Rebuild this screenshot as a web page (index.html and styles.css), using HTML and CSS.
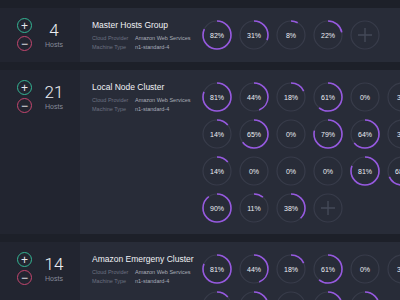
FILE: index.html
```html
<!DOCTYPE html>
<html lang="en">
<head>
    <meta charset="UTF-8">
    <title>Host Clusters</title>
    <link rel="stylesheet" href="styles.css">
</head>
<body>
    <div class="clusters">

        <!-- Master Hosts Group -->
        <div class="cluster">
            <div class="hosts">
                <div class="steppers">
                    <span class="step plus">+</span>
                    <span class="step minus">&minus;</span>
                </div>
                <div class="count">
                    <div class="num">4</div>
                    <div class="label">Hosts</div>
                </div>
            </div>
            <div class="detail">
                <div class="info">
                    <div class="title">Master Hosts Group</div>
                    <div class="meta"><span>Cloud Provider</span><b>Amazon Web Services</b></div>
                    <div class="meta"><span>Machine Type</span><b>n1-standard-4</b></div>
                </div>
                <div class="rings">
                    <div class="ring"><svg viewBox="0 0 30 30"><circle class="track" cx="15" cy="15" r="14"/><circle class="arc" cx="15" cy="15" r="14" pathLength="100" stroke-dasharray="82 100"/></svg><span>82%</span></div>
                    <div class="ring"><svg viewBox="0 0 30 30"><circle class="track" cx="15" cy="15" r="14"/><circle class="arc" cx="15" cy="15" r="14" pathLength="100" stroke-dasharray="31 100"/></svg><span>31%</span></div>
                    <div class="ring"><svg viewBox="0 0 30 30"><circle class="track" cx="15" cy="15" r="14"/><circle class="arc" cx="15" cy="15" r="14" pathLength="100" stroke-dasharray="8 100"/></svg><span>8%</span></div>
                    <div class="ring"><svg viewBox="0 0 30 30"><circle class="track" cx="15" cy="15" r="14"/><circle class="arc" cx="15" cy="15" r="14" pathLength="100" stroke-dasharray="22 100"/></svg><span>22%</span></div>
                    <div class="ring add"><svg viewBox="0 0 30 30"><circle class="track" cx="15" cy="15" r="14"/><path d="M15 8v14M8 15h14"/></svg></div>
                </div>
            </div>
        </div>

        <!-- Local Node Cluster -->
        <div class="cluster">
            <div class="hosts">
                <div class="steppers">
                    <span class="step plus">+</span>
                    <span class="step minus">&minus;</span>
                </div>
                <div class="count">
                    <div class="num">21</div>
                    <div class="label">Hosts</div>
                </div>
            </div>
            <div class="detail">
                <div class="info">
                    <div class="title">Local Node Cluster</div>
                    <div class="meta"><span>Cloud Provider</span><b>Amazon Web Services</b></div>
                    <div class="meta"><span>Machine Type</span><b>n1-standard-4</b></div>
                </div>
                <div class="rings">
                    <div class="ring"><svg viewBox="0 0 30 30"><circle class="track" cx="15" cy="15" r="14"/><circle class="arc" cx="15" cy="15" r="14" pathLength="100" stroke-dasharray="81 100"/></svg><span>81%</span></div>
                    <div class="ring"><svg viewBox="0 0 30 30"><circle class="track" cx="15" cy="15" r="14"/><circle class="arc" cx="15" cy="15" r="14" pathLength="100" stroke-dasharray="44 100"/></svg><span>44%</span></div>
                    <div class="ring"><svg viewBox="0 0 30 30"><circle class="track" cx="15" cy="15" r="14"/><circle class="arc" cx="15" cy="15" r="14" pathLength="100" stroke-dasharray="18 100"/></svg><span>18%</span></div>
                    <div class="ring"><svg viewBox="0 0 30 30"><circle class="track" cx="15" cy="15" r="14"/><circle class="arc" cx="15" cy="15" r="14" pathLength="100" stroke-dasharray="61 100"/></svg><span>61%</span></div>
                    <div class="ring"><svg viewBox="0 0 30 30"><circle class="track" cx="15" cy="15" r="14"/><circle class="arc" cx="15" cy="15" r="14" pathLength="100" stroke-dasharray="0 100"/></svg><span>0%</span></div>
                    <div class="ring"><svg viewBox="0 0 30 30"><circle class="track" cx="15" cy="15" r="14"/><circle class="arc" cx="15" cy="15" r="14" pathLength="100" stroke-dasharray="3 100"/></svg><span>3%</span></div>

                    <div class="ring"><svg viewBox="0 0 30 30"><circle class="track" cx="15" cy="15" r="14"/><circle class="arc" cx="15" cy="15" r="14" pathLength="100" stroke-dasharray="14 100"/></svg><span>14%</span></div>
                    <div class="ring"><svg viewBox="0 0 30 30"><circle class="track" cx="15" cy="15" r="14"/><circle class="arc" cx="15" cy="15" r="14" pathLength="100" stroke-dasharray="65 100"/></svg><span>65%</span></div>
                    <div class="ring"><svg viewBox="0 0 30 30"><circle class="track" cx="15" cy="15" r="14"/><circle class="arc" cx="15" cy="15" r="14" pathLength="100" stroke-dasharray="0 100"/></svg><span>0%</span></div>
                    <div class="ring"><svg viewBox="0 0 30 30"><circle class="track" cx="15" cy="15" r="14"/><circle class="arc" cx="15" cy="15" r="14" pathLength="100" stroke-dasharray="79 100"/></svg><span>79%</span></div>
                    <div class="ring"><svg viewBox="0 0 30 30"><circle class="track" cx="15" cy="15" r="14"/><circle class="arc" cx="15" cy="15" r="14" pathLength="100" stroke-dasharray="64 100"/></svg><span>64%</span></div>
                    <div class="ring"><svg viewBox="0 0 30 30"><circle class="track" cx="15" cy="15" r="14"/><circle class="arc" cx="15" cy="15" r="14" pathLength="100" stroke-dasharray="3 100"/></svg><span>3%</span></div>

                    <div class="ring"><svg viewBox="0 0 30 30"><circle class="track" cx="15" cy="15" r="14"/><circle class="arc" cx="15" cy="15" r="14" pathLength="100" stroke-dasharray="14 100"/></svg><span>14%</span></div>
                    <div class="ring"><svg viewBox="0 0 30 30"><circle class="track" cx="15" cy="15" r="14"/><circle class="arc" cx="15" cy="15" r="14" pathLength="100" stroke-dasharray="0 100"/></svg><span>0%</span></div>
                    <div class="ring"><svg viewBox="0 0 30 30"><circle class="track" cx="15" cy="15" r="14"/><circle class="arc" cx="15" cy="15" r="14" pathLength="100" stroke-dasharray="0 100"/></svg><span>0%</span></div>
                    <div class="ring"><svg viewBox="0 0 30 30"><circle class="track" cx="15" cy="15" r="14"/><circle class="arc" cx="15" cy="15" r="14" pathLength="100" stroke-dasharray="0 100"/></svg><span>0%</span></div>
                    <div class="ring"><svg viewBox="0 0 30 30"><circle class="track" cx="15" cy="15" r="14"/><circle class="arc" cx="15" cy="15" r="14" pathLength="100" stroke-dasharray="81 100"/></svg><span>81%</span></div>
                    <div class="ring"><svg viewBox="0 0 30 30"><circle class="track" cx="15" cy="15" r="14"/><circle class="arc" cx="15" cy="15" r="14" pathLength="100" stroke-dasharray="68 100"/></svg><span>68%</span></div>

                    <div class="ring"><svg viewBox="0 0 30 30"><circle class="track" cx="15" cy="15" r="14"/><circle class="arc" cx="15" cy="15" r="14" pathLength="100" stroke-dasharray="90 100"/></svg><span>90%</span></div>
                    <div class="ring"><svg viewBox="0 0 30 30"><circle class="track" cx="15" cy="15" r="14"/><circle class="arc" cx="15" cy="15" r="14" pathLength="100" stroke-dasharray="11 100"/></svg><span>11%</span></div>
                    <div class="ring"><svg viewBox="0 0 30 30"><circle class="track" cx="15" cy="15" r="14"/><circle class="arc" cx="15" cy="15" r="14" pathLength="100" stroke-dasharray="38 100"/></svg><span>38%</span></div>
                    <div class="ring add"><svg viewBox="0 0 30 30"><circle class="track" cx="15" cy="15" r="14"/><path d="M15 8v14M8 15h14"/></svg></div>
                </div>
            </div>
        </div>

        <!-- Amazon Emergeny Cluster -->
        <div class="cluster">
            <div class="hosts">
                <div class="steppers">
                    <span class="step plus">+</span>
                    <span class="step minus">&minus;</span>
                </div>
                <div class="count">
                    <div class="num">14</div>
                    <div class="label">Hosts</div>
                </div>
            </div>
            <div class="detail">
                <div class="info">
                    <div class="title">Amazon Emergeny Cluster</div>
                    <div class="meta"><span>Cloud Provider</span><b>Amazon Web Services</b></div>
                    <div class="meta"><span>Machine Type</span><b>n1-standard-4</b></div>
                </div>
                <div class="rings">
                    <div class="ring"><svg viewBox="0 0 30 30"><circle class="track" cx="15" cy="15" r="14"/><circle class="arc" cx="15" cy="15" r="14" pathLength="100" stroke-dasharray="81 100"/></svg><span>81%</span></div>
                    <div class="ring"><svg viewBox="0 0 30 30"><circle class="track" cx="15" cy="15" r="14"/><circle class="arc" cx="15" cy="15" r="14" pathLength="100" stroke-dasharray="44 100"/></svg><span>44%</span></div>
                    <div class="ring"><svg viewBox="0 0 30 30"><circle class="track" cx="15" cy="15" r="14"/><circle class="arc" cx="15" cy="15" r="14" pathLength="100" stroke-dasharray="18 100"/></svg><span>18%</span></div>
                    <div class="ring"><svg viewBox="0 0 30 30"><circle class="track" cx="15" cy="15" r="14"/><circle class="arc" cx="15" cy="15" r="14" pathLength="100" stroke-dasharray="61 100"/></svg><span>61%</span></div>
                    <div class="ring"><svg viewBox="0 0 30 30"><circle class="track" cx="15" cy="15" r="14"/><circle class="arc" cx="15" cy="15" r="14" pathLength="100" stroke-dasharray="0 100"/></svg><span>0%</span></div>
                    <div class="ring"><svg viewBox="0 0 30 30"><circle class="track" cx="15" cy="15" r="14"/><circle class="arc" cx="15" cy="15" r="14" pathLength="100" stroke-dasharray="3 100"/></svg><span>3%</span></div>

                    <div class="ring"><svg viewBox="0 0 30 30"><circle class="track" cx="15" cy="15" r="14"/><circle class="arc" cx="15" cy="15" r="14" pathLength="100" stroke-dasharray="14 100"/></svg><span>14%</span></div>
                    <div class="ring"><svg viewBox="0 0 30 30"><circle class="track" cx="15" cy="15" r="14"/><circle class="arc" cx="15" cy="15" r="14" pathLength="100" stroke-dasharray="65 100"/></svg><span>65%</span></div>
                    <div class="ring"><svg viewBox="0 0 30 30"><circle class="track" cx="15" cy="15" r="14"/><circle class="arc" cx="15" cy="15" r="14" pathLength="100" stroke-dasharray="0 100"/></svg><span>0%</span></div>
                    <div class="ring"><svg viewBox="0 0 30 30"><circle class="track" cx="15" cy="15" r="14"/><circle class="arc" cx="15" cy="15" r="14" pathLength="100" stroke-dasharray="79 100"/></svg><span>79%</span></div>
                    <div class="ring"><svg viewBox="0 0 30 30"><circle class="track" cx="15" cy="15" r="14"/><circle class="arc" cx="15" cy="15" r="14" pathLength="100" stroke-dasharray="64 100"/></svg><span>64%</span></div>
                </div>
            </div>
        </div>

    </div>
</body>
</html>
```

FILE: styles.css
```css
/* Halaman dasar */
body {
    margin: 0;
    background: #1d2029;
    font-family: "Liberation Sans", Arial, sans-serif;
    color: #e9ebf1;
    overflow: hidden;
}

.clusters {
    display: flex;
    flex-direction: column;
    gap: 8px;
    padding-top: 8px;
}

/* Satu baris cluster */
.cluster {
    display: flex;
}

/* Kolom kiri: jumlah host */
.hosts {
    width: 80px;
    flex-shrink: 0;
    background: #222530;
    display: flex;
    align-items: flex-start;
    gap: 11px;
    padding: 10px 0 0 17px;
    box-sizing: border-box;
}

.steppers {
    display: flex;
    flex-direction: column;
    gap: 3px;
}

.step {
    width: 15px;
    height: 15px;
    box-sizing: border-box;
    border-radius: 50%;
    display: flex;
    align-items: center;
    justify-content: center;
    font-size: 12px;
    line-height: 1;
    color: #e8e9ee;
}

.step.plus {
    border: 1.5px solid #34b594;
}

.step.minus {
    border: 1.5px solid #c4466f;
}

.count {
    text-align: center;
    width: 22px;
}

.count .num {
    font-family: Roboto, "Liberation Sans", sans-serif;
    font-weight: 300;
    font-size: 17px;
    line-height: 18px;
    margin-top: 3px;
    color: #eceef3;
}

.count .label {
    font-size: 7px;
    color: #868b99;
    margin-top: 2px;
}

/* Kolom kanan: detail cluster */
.detail {
    flex: 1;
    background: #282c38;
    display: flex;
    padding: 12px 0 11px 12px;
}

.info {
    width: 110px;
    flex-shrink: 0;
    white-space: nowrap;
}

.title {
    font-size: 8.5px;
    line-height: 10px;
    color: #f0f1f5;
    margin-bottom: 4px;
}

.meta {
    display: flex;
    font-size: 5.5px;
    line-height: 8.5px;
}

.meta span {
    width: 43px;
    color: #6c7181;
}

.meta b {
    font-weight: normal;
    color: #a9adb9;
}

/* Lingkaran penggunaan */
.rings {
    display: grid;
    grid-template-columns: repeat(6, 30px);
    gap: 7px;
    align-content: start;
}

.ring {
    width: 30px;
    height: 30px;
    display: grid;
    place-items: center;
}

.ring svg,
.ring span {
    grid-area: 1 / 1;
}

.ring svg {
    width: 30px;
    height: 30px;
    transform: rotate(-90deg);
}

.ring circle {
    fill: none;
    stroke-width: 1.2;
}

.ring .track {
    stroke: #383c4a;
}

.ring .arc {
    stroke: #9659df;
    stroke-width: 1.6;
}

.ring span {
    font-size: 7px;
    color: #eceef4;
}

.ring.add path {
    stroke: #444958;
    stroke-width: 1.4;
}
```
